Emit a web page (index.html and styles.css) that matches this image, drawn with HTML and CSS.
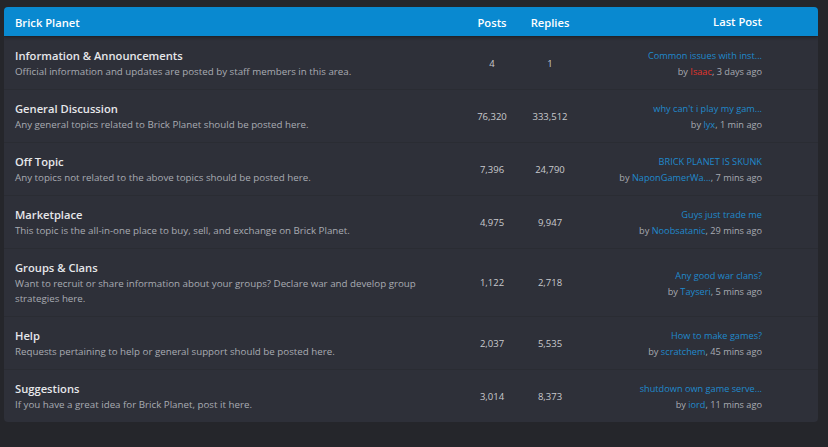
FILE: index.html
```html
<!DOCTYPE html>
<html>
<head>
<meta charset="utf-8">
<link rel="stylesheet" href="styles.css">
</head>
<body>
<div class="card">
  <div class="row head">
    <div class="c-name">Brick Planet</div>
    <div class="c-posts">Posts</div>
    <div class="c-replies">Replies</div>
    <div class="c-last">Last Post</div>
  </div>
  <div class="row">
    <div class="c-name"><div class="title">Information &amp; Announcements</div><div class="desc">Official information and updates are posted by staff members in this area.</div></div>
    <div class="c-posts num">4</div>
    <div class="c-replies num">1</div>
    <div class="c-last"><a class="link">Common issues with inst...</a><div class="by">by <a class="red">Isaac</a>, 3 days ago</div></div>
  </div>
  <div class="row">
    <div class="c-name"><div class="title">General Discussion</div><div class="desc">Any general topics related to Brick Planet should be posted here.</div></div>
    <div class="c-posts num">76,320</div>
    <div class="c-replies num">333,512</div>
    <div class="c-last"><a class="link">why can't i play my gam...</a><div class="by">by <a class="link">lyx</a>, 1 min ago</div></div>
  </div>
  <div class="row">
    <div class="c-name"><div class="title">Off Topic</div><div class="desc">Any topics not related to the above topics should be posted here.</div></div>
    <div class="c-posts num">7,396</div>
    <div class="c-replies num">24,790</div>
    <div class="c-last"><a class="link">BRICK PLANET IS SKUNK</a><div class="by">by <a class="link">NaponGamerWa...</a>, 7 mins ago</div></div>
  </div>
  <div class="row">
    <div class="c-name"><div class="title">Marketplace</div><div class="desc">This topic is the all-in-one place to buy, sell, and exchange on Brick Planet.</div></div>
    <div class="c-posts num">4,975</div>
    <div class="c-replies num">9,947</div>
    <div class="c-last"><a class="link">Guys just trade me</a><div class="by">by <a class="link">Noobsatanic</a>, 29 mins ago</div></div>
  </div>
  <div class="row">
    <div class="c-name"><div class="title">Groups &amp; Clans</div><div class="desc">Want to recruit or share information about your groups? Declare war and develop group strategies here.</div></div>
    <div class="c-posts num">1,122</div>
    <div class="c-replies num">2,718</div>
    <div class="c-last"><a class="link">Any good war clans?</a><div class="by">by <a class="link">Tayseri</a>, 5 mins ago</div></div>
  </div>
  <div class="row">
    <div class="c-name"><div class="title">Help</div><div class="desc">Requests pertaining to help or general support should be posted here.</div></div>
    <div class="c-posts num">2,037</div>
    <div class="c-replies num">5,535</div>
    <div class="c-last"><a class="link">How to make games?</a><div class="by">by <a class="link">scratchem</a>, 45 mins ago</div></div>
  </div>
  <div class="row">
    <div class="c-name"><div class="title">Suggestions</div><div class="desc">If you have a great idea for Brick Planet, post it here.</div></div>
    <div class="c-posts num">3,014</div>
    <div class="c-replies num">8,373</div>
    <div class="c-last"><a class="link">shutdown own game serve...</a><div class="by">by <a class="link">iord</a>, 11 mins ago</div></div>
  </div>
</div>
</body>
</html>
```
FILE: styles.css
```css
html, body {
  margin: 0;
  padding: 0;
  background: #25262b;
  font-family: "Open Sans", "Noto Sans", sans-serif;
}
body {
  padding: 7px 10px 0 4px;
}
.card {
  width: 814px;
  background: #2e3039;
  border-radius: 4px;
  overflow: hidden;
}
.row {
  display: grid;
  grid-template-columns: 1fr 60px 56px 240px;
  align-items: center;
  border-top: 1px solid #2a2c33;
}
.row.head {
  background: #0989d0;
  color: #ffffff;
  font-weight: 600;
  font-size: 11.2px;
  height: 29px;
  border-top: 0;
  box-shadow: 0 2px 3px rgba(0,0,0,0.25);
  position: relative;
}
.c-name {
  padding: 10px 30px 10px 11px;
}
.head .c-name { padding: 1px 11px 0; }
.head .c-posts, .head .c-replies, .head .c-last { padding-top: 1px; }
.c-posts, .c-replies { text-align: center; }
.c-last {
  text-align: right;
  padding: 2px 56px 0 0;
  font-size: 9.2px;
  line-height: 16px;
}
.head .c-last { font-size: 11.2px; padding-top: 1px; }
.title {
  color: #e6e7ea;
  font-size: 11.2px;
  font-weight: 600;
  line-height: 17px;
}
.desc {
  color: #a8abb2;
  font-size: 9.75px;
  line-height: 15px;
}
.num {
  color: #c9cacd;
  font-size: 9.5px;
}
.link { color: #2089cc; text-decoration: none; }
.red { color: #e0342c; text-decoration: none; }
.by { color: #a8abb2; }
```
